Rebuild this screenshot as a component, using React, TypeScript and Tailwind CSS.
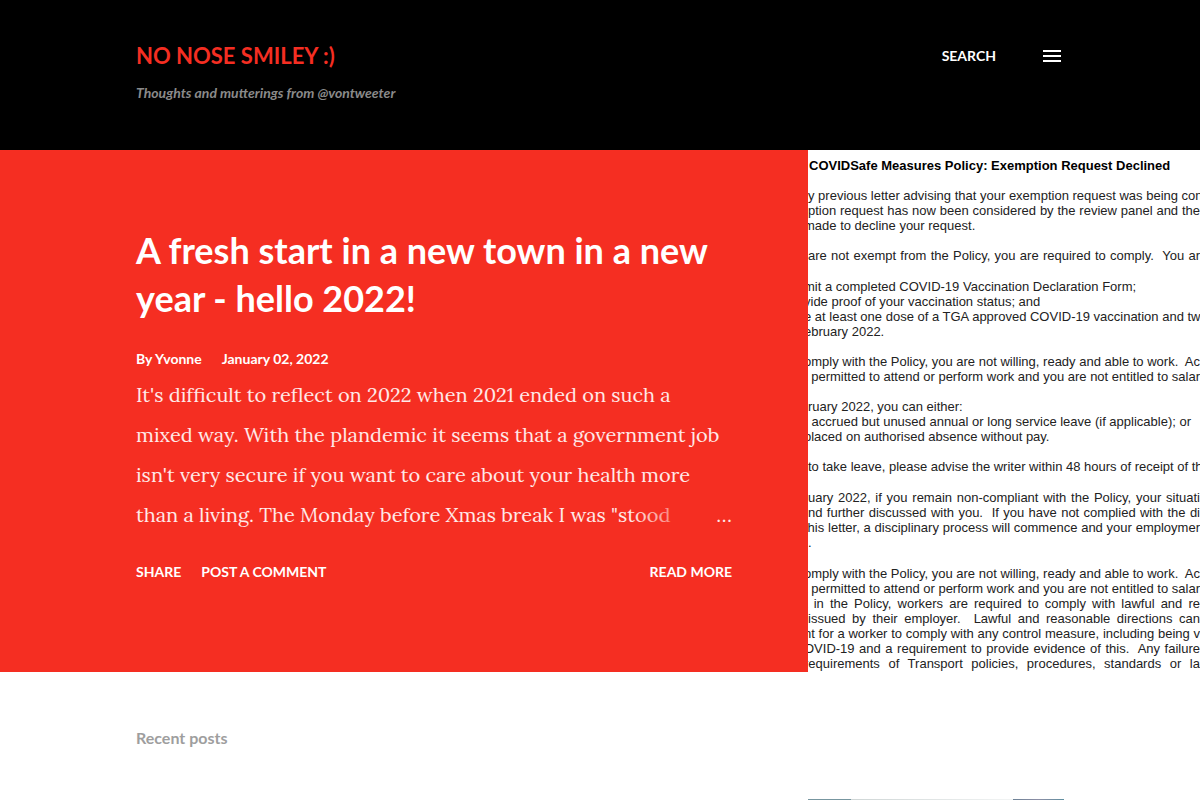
import { clsx } from "clsx";

/* ================= TYPES ================= */

interface LetterLine {
  text: string;
  cut?: boolean;
  fill?: boolean;
}

/* ================= DATA ================= */

const excerpt = [
  "It's difficult to reflect on 2022 when 2021 ended on such a",
  "mixed way. With the plandemic it seems that a government job",
  "isn't very secure if you want to care about your health more",
];

const letter: LetterLine[][] = [
  [
    { text: "y previous letter advising that your exemption request was being con", fill: true },
    { text: "ption request has now been considered by the review panel and the", fill: true },
    { text: "made to decline your request.", cut: true },
  ],
  [{ text: "are not exempt from the Policy, you are required to comply.\u00a0 You ar", fill: true }],
  [
    { text: "mit a completed COVID-19 Vaccination Declaration Form;", cut: true },
    { text: "vide proof of your vaccination status; and", cut: true },
    { text: "e at least one dose of a TGA approved COVID-19 vaccination and two", cut: true, fill: true },
    { text: "ebruary 2022.", cut: true },
  ],
  [
    { text: "omply with the Policy, you are not willing, ready and able to work.\u00a0 Ac", cut: true, fill: true },
    { text: "t permitted to attend or perform work and you are not entitled to salary", cut: true, fill: true },
  ],
  [
    { text: "ruary 2022, you can either:" },
    { text: "\u00a0accrued but unused annual or long service leave (if applicable); or" },
    { text: "placed on authorised absence without pay.", cut: true },
  ],
  [{ text: "to take leave, please advise the writer within 48 hours of receipt of th", fill: true }],
  [
    { text: "uary 2022, if you remain non-compliant with the Policy, your situati", fill: true },
    { text: "nd further discussed with you.\u00a0 If you have not complied with the di", fill: true },
    { text: "this letter, a disciplinary process will commence and your employmer", cut: true, fill: true },
    { text: "." },
  ],
  [
    { text: "omply with the Policy, you are not willing, ready and able to work.\u00a0 Ac", cut: true, fill: true },
    { text: "t permitted to attend or perform work and you are not entitled to salary", cut: true, fill: true },
    { text: "t in the Policy, workers are required to comply with lawful and re", cut: true, fill: true },
    { text: "issued by their employer.\u00a0 Lawful and reasonable directions can", fill: true },
    { text: "nt for a worker to comply with any control measure, including being v", cut: true, fill: true },
    { text: "OVID-19 and a requirement to provide evidence of this.\u00a0 Any failure", cut: true, fill: true },
    { text: "requirements of Transport policies, procedures, standards or la", cut: true, fill: true },
  ],
];

/* ================= COMPONENTS ================= */

function Header() {
  return (
    <header className="bg-black px-[136px] pt-10 pb-12">
      <div className="flex items-center justify-between">
        <h1 className="text-[22px] leading-8 font-bold text-[#f52e22]">
          <a href="#">NO NOSE SMILEY :)</a>
        </h1>
        <div className="flex items-center gap-11 text-white">
          <button className="text-sm font-bold">SEARCH</button>
          <button aria-label="Menu">
            <svg className="size-6" viewBox="0 0 24 24" fill="currentColor">
              <path d="M3 18h18v-2H3v2zm0-5h18v-2H3v2zm0-7v2h18V6H3z" />
            </svg>
          </button>
        </div>
      </div>
      <p className="mt-3 text-sm leading-[18px] font-bold text-[#8a8a8a] italic">
        Thoughts and mutterings from @vontweeter
      </p>
    </header>
  );
}

function FeaturedPost() {
  return (
    <article className="min-w-0 bg-[#f52e22] pt-19 pr-19 pb-22 pl-[136px] text-white">
      <h2 className="text-4xl leading-12 font-bold">
        <a href="#">A fresh start in a new town in a new year - hello 2022!</a>
      </h2>
      <div className="mt-[25px] flex gap-5 text-sm leading-6 font-bold">
        <span>By Yvonne</span>
        <a href="#">January 02, 2022</a>
      </div>
      <div className="mt-1 font-['Lora','Liberation_Serif',serif] text-xl leading-10 text-white/90">
        {excerpt.map((line) => (
          <p key={line}>{line}</p>
        ))}
        <p className="flex justify-between">
          <span className="relative">
            than a living. The Monday before Xmas break I was "stood
            <span className="absolute inset-y-0 right-0 w-10 bg-linear-to-r from-transparent to-[#f52e22]/50" />
          </span>
          <span>…</span>
        </p>
      </div>
      <div className="mt-[25px] flex gap-5 text-sm leading-6 font-bold">
        <button>SHARE</button>
        <a href="#">POST A COMMENT</a>
        <a href="#" className="ml-auto">
          READ MORE
        </a>
      </div>
    </article>
  );
}

function LetterPhoto() {
  return (
    <div className="min-w-0 overflow-hidden bg-white pt-2 font-['Liberation_Sans',sans-serif] text-[13px] leading-[15px] whitespace-nowrap text-[#222]">
      <p className="ml-px font-bold text-black">COVIDSafe Measures Policy: Exemption Request Declined</p>
      {letter.map((paragraph, i) => (
        <div key={i} className={paragraph.length > 3 ? "mt-4" : "mt-[15px]"}>
          {paragraph.map((line) => (
            <p
              key={line.text}
              className={clsx(line.cut && "-ml-1", line.fill && "[text-align-last:justify]")}
            >
              {line.text}
            </p>
          ))}
        </div>
      ))}
    </div>
  );
}

/* ================= PAGE ================= */

export default function App() {
  return (
    <div className="min-h-screen bg-white font-['Lato',sans-serif]">
      <Header />
      <main>
        <section className="grid grid-cols-[101fr_49fr]">
          <FeaturedPost />
          <LetterPhoto />
        </section>
        <section className="px-[136px] pt-[54px]">
          <h3 className="text-base leading-6 font-bold text-[#9e9e9e]">Recent posts</h3>
          {/* top edge of the first thumbnail */}
          <div className="mt-[49px] ml-auto flex h-px w-64">
            <span className="w-1/6 bg-[#7796a0]" />
            <span className="flex-1 bg-linear-to-r from-[#cfd6d6] to-[#f2f4f4]" />
            <span className="w-1/5 bg-linear-to-r from-[#6d8296] via-[#8c8fa6] to-[#5f8fa0]" />
          </div>
        </section>
      </main>
    </div>
  );
}
